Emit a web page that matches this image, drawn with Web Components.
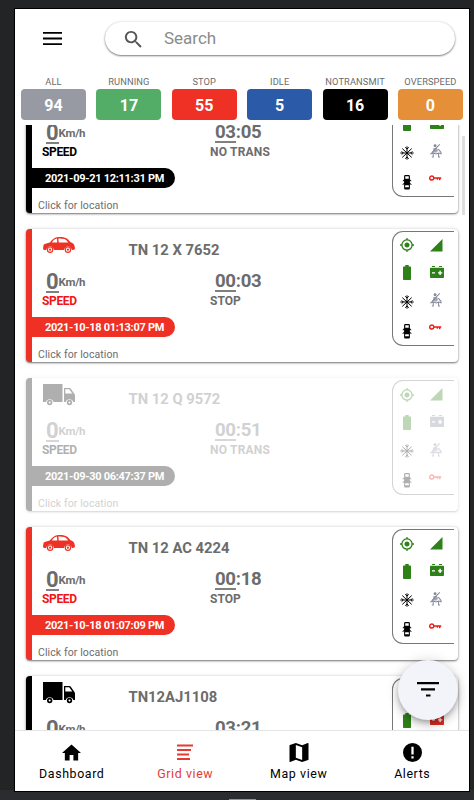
<!DOCTYPE html>
<html lang="en">
<head>
<meta charset="utf-8">
<title>Vehicles</title>
<style>
    html, body {
        margin: 0;
        height: 100%;
        overflow: hidden;
        font-family: Roboto, "Liberation Sans", sans-serif;
        background: #262729;
    }
</style>
</head>
<body>
<fleet-app></fleet-app>
<script>
const ICONS = {
    search: ['0 0 24 24', '<path d="M15.5 14h-.79l-.28-.27C15.41 12.59 16 11.11 16 9.5 16 5.91 13.09 3 9.5 3S3 5.91 3 9.5 5.91 16 9.5 16c1.61 0 3.09-.59 4.23-1.57l.27.28v.79l5 4.99L20.49 19l-4.99-5zm-6 0C7.01 14 5 11.99 5 9.5S7.01 5 9.5 5 14 7.01 14 9.5 11.99 14 9.5 14z"/>'],
    menu: ['0 0 19 13', '<path d="M0 0h19v1.8H0zM0 5.6h19v1.8H0zM0 11.2h19v1.800H0z"/>'],
    filter: ['0 0 22 15', '<path d="M0 0h22v2.2H0zM4 6.2h14v2.2H4zM9 12.4h4.5v2.200H9z"/>'],
    home: ['2 3 20 17', '<path d="M10 20v-6h4v6h5v-8h3L12 3 2 12h3v8z"/>'],
    grid: ['0 0 16 16', '<path d="M0 0h16v2H0zM0 4.5h14v2H0zM0 9h12v2H0zM0 13.5h13v2H0z"/>'],
    map: ['3 3 18 18', '<path d="M20.5 3l-.16.03L15 5.1 9 3 3.36 4.9c-.21.07-.36.25-.36.48V20.5c0 .28.22.5.5.5l.16-.03L9 18.9l6 2.1 5.64-1.9c.21-.07.36-.25.36-.48V3.5c0-.28-.22-.5-.5-.5zM15 19l-6-2.11V5l6 2.11V19z"/>'],
    alert: ['2 2 20 20', '<path fill-rule="evenodd" d="M12 2a10 10 0 1 0 0 20 10 10 0 0 0 0-20zm-1.2 4h2.4v8h-2.4zm0 10h2.4v2.2h-2.4z"/>'],
    gps: ['1 1 22 22', '<path d="M12 8c-2.21 0-4 1.79-4 4s1.79 4 4 4 4-1.79 4-4-1.79-4-4-4zm8.94 3c-.46-4.17-3.77-7.48-7.94-7.94V1h-2v2.06C6.83 3.52 3.52 6.83 3.06 11H1v2h2.06c.46 4.17 3.77 7.48 7.94 7.94V23h2v-2.06c4.17-.46 7.48-3.77 7.94-7.94H23v-2h-2.06zM12 19c-3.87 0-7-3.13-7-7s3.13-7 7-7 7 3.13 7 7-3.13 7-7 7z"/>'],
    signal: ['0 0 12 12', '<path d="M12 0v12H0z"/>'],
    battery: ['0 0 8 15', '<path d="M2.300 0h3.400v1.400h1.500c.5 0 .8.3.8.8v12c0 .5-.3.8-.8.8H.8c-.5 0-.8-.3-.8-.8v-12c0-.5.3-.8.8-.8h1.500z"/>'],
    accumulator: ['0 0 14 12', '<path fill-rule="evenodd" d="M2 0h3v1H2zM9 0h3v1H9zM.7 1.7h12.6c.4 0 .7.3.7.7v8.900c0 .4-.3.7-.7.7H.7c-.4 0-.7-.3-.7-.7V2.400c0-.4.3-.7.7-.7zM2 6.300v1.200h3V6.300zM9.400 4.700v1.500H8v1.400h1.400v1.500h1.400V7.600h1.500V6.200h-1.500V4.700z"/>'],
    snow: ['0 0 14 14', '<path fill="none" stroke="currentColor" stroke-width="1" d="M7 .3v13.400M.3 7h13.400M2.300 2.600l9.400 8.800M11.700 2.600l-9.400 8.800M5.200 1.300L7 3l1.800-1.700M5.200 12.700L7 11l1.800 1.700M1.600 5.300L3.300 7 1.600 8.700M12.400 5.300L10.700 7l1.700 1.700"/>'],
    seatbelt: ['0 0 13 15', '<circle cx="5.500" cy="1.800" r="1.600"/><path d="M3.700 4.200h3.500l1.500 2-1 3H3z" opacity=".75"/><path fill="none" stroke="currentColor" stroke-width="1.100" d="M10.500.4L1.800 9.600M9 5.500l3.300 4M.3 10.800l3.300-1 3.200 1 2.700-1 3.200 1M3.500 10.500v3.600H2M9.300 10.500v3.600h1.500"/>'],
    doors: ['0 0 10 15', '<path fill-rule="evenodd" d="M2.700 0h4.600l.7 1v3.500l1.600 1.700-.5.500L8 5.900v2l1.800 2-.6.500L8 9.300V14l-.7 1H2.700L2 14V9.300l-1.200 1.100-.6-.5L2 7.900v-2l-1.100.8-.5-.5L2 4.500V1zM3.200 1.300v2.700h3.600V1.300zM3.200 10.600L3 12.700h4l-.2-2.100z"/>'],
    key: ['0 0 13 6', '<path fill-rule="evenodd" d="M2.900.1a2.900 2.900 0 0 1 2.800 2.100H12.700v1.500h-.8v1.700h-1.500V3.700H9.400v1.200H8V3.700H5.700A2.900 2.900 0 1 1 2.900.1zm0 1.500a1.400 1.400 0 1 0 0 2.800 1.400 1.400 0 0 0 0-2.800z"/>'],
    car: ['0 0 32 16', '<path fill-rule="evenodd" d="M.8 12.900L0 11.500l.6-3.700C2 6.600 4.500 6 6.800 5.400 9 2.700 11.500.4 14 .2c3.200-.4 6.900-.2 9.300 1 1.700 1 3 2.500 4.300 4 1.800.7 3.500 1.700 3.800 3.200l.6 3-.9 1.300-2.300.2a4 4 0 0 0-7.800 0H11a4 4 0 0 0-7.800 0zM8.800 5.400h5.500l-.4-3.800c-2 .2-3.700 1.800-5.100 3.800zM15.300 1.500l.5 3.900h9.300c-1.100-1.600-2.300-2.800-3.900-3.300-1.900-.6-3.900-.7-5.900-.6zM7.100 9.500a3.200 3.200 0 1 1 0 6.400 3.200 3.200 0 0 1 0-6.400zm0 1.100a2.100 2.100 0 1 0 0 4.200 2.100 2.100 0 0 0 0-4.200zM24.900 9.500a3.200 3.200 0 1 1 0 6.400 3.200 3.200 0 0 1 0-6.400zm0 1.100a2.100 2.100 0 1 0 0 4.200 2.100 2.100 0 0 0 0-4.200z"/><circle cx="7.100" cy="12.700" r="1.100"/><circle cx="24.900" cy="12.700" r="1.100"/>'],
    truck: ['0 0 32 21', '<path fill-rule="evenodd" d="M0 0h19.500v18h-9a4 4 0 0 0-7.600 0H0zM21 4h5.500c.6 0 1 .3 1.300.7l3.300 4.800.9 1.600V18h-1.700a4 4 0 0 0-7.600 0H21zM22.300 5.300V9.500h7L26.200 5.300z"/><path fill-rule="evenodd" d="M6.700 15.800a2.700 2.700 0 1 1 0 5.400 2.700 2.700 0 0 1 0-5.400zm0 1.700a1 1 0 1 0 0 2 1 1 0 0 0 0-2zM26.500 15.800a2.700 2.700 0 1 1 0 5.400 2.700 2.700 0 0 1 0-5.400zm0 1.700a1 1 0 1 0 0 2 1 1 0 0 0 0-2z"/>']
};

class FleetIcon extends HTMLElement {
    connectedCallback() {
        const [viewBox, shapes] = ICONS[this.getAttribute('name')];
        this.attachShadow({ mode: 'open' }).innerHTML = `
            <style>
                :host { display: inline-block; flex: none; }
                svg { display: block; width: 100%; height: 100%; fill: currentColor; overflow: visible; }
            </style>
            <svg viewBox="${viewBox}">${shapes}</svg>
        `;
    }
}

class SearchHeader extends HTMLElement {
    connectedCallback() {
        this.attachShadow({ mode: 'open' }).innerHTML = `
            <style>
                :host { display: flex; align-items: center; padding: 13px 14px 0 28px; }
                .menu { width: 19px; height: 13px; margin-right: 43px; }
                .field {
                    flex: 1;
                    display: flex;
                    align-items: center;
                    height: 33px;
                    border-radius: 17px;
                    color: #8b8b8b;
                    font-size: 17px;
                    line-height: 20px;
                    box-shadow: 0 1px 2px rgba(0, 0, 0, .48), 0 0 3px rgba(0, 0, 0, .12);
                }
                .text { padding-bottom: 2px; }
                .search { width: 23px; height: 23px; margin: 1px 19px 0 17px; color: #555; }
            </style>
            <fleet-icon class="menu" name="menu"></fleet-icon>
            <div class="field"><fleet-icon class="search" name="search"></fleet-icon><div class="text"><slot></slot></div></div>
        `;
    }
}

class StatusChip extends HTMLElement {
    connectedCallback() {
        this.attachShadow({ mode: 'open' }).innerHTML = `
            <style>
                :host { display: block; width: 65px; flex: none; text-align: center; }
                .label {
                    display: flex;
                    justify-content: center;
                    height: 13px;
                    line-height: 13px;
                    font-size: 9.3px;
                    letter-spacing: .1px;
                    color: #6c6c6c;
                    white-space: nowrap;
                }
                .count {
                    margin-top: 1px;
                    height: 31px;
                    line-height: 33px;
                    border-radius: 4px;
                    background: ${this.getAttribute('color')};
                    color: #fff;
                    font-size: 16px;
                    font-weight: 700;
                }
            </style>
            <div class="label"><slot></slot></div>
            <div class="count">${this.getAttribute('count')}</div>
        `;
    }
}

class SensorPanel extends HTMLElement {
    connectedCallback() {
        this.attachShadow({ mode: 'open' }).innerHTML = `
            <style>
                :host {
                    display: grid;
                    box-sizing: border-box;
                    grid-template-columns: 28px 30px;
                    grid-template-rows: 27px 28px 30px 28px;
                    place-items: center;
                    width: 62px;
                    height: 115px;
                    border: 1px solid #777;
                    border-right: 0;
                    border-radius: 11px 0 0 11px;
                    color: #000;
                }
                .gps { width: 14px; height: 14px; color: #2e8019; }
                .signal { width: 12.5px; height: 12.5px; color: #2e8019; margin-bottom: 1px; }
                .battery { width: 8px; height: 15px; color: #2e8019; }
                .power { width: 14px; height: 12px; color: ${this.getAttribute('power')}; margin: 0 0 2px 2px; }
                .snow { width: 14px; height: 14px; }
                .seatbelt { width: 12px; height: 14px; color: #85889a; margin-bottom: 3px; }
                .doors { width: 10px; height: 14.5px; }
                .key { width: 12.5px; height: 6px; color: #ec1c12; margin: 0 1px 7px 0; }
            </style>
            <fleet-icon class="gps" name="gps"></fleet-icon>
            <fleet-icon class="signal" name="signal"></fleet-icon>
            <fleet-icon class="battery" name="battery"></fleet-icon>
            <fleet-icon class="power" name="accumulator"></fleet-icon>
            <fleet-icon class="snow" name="snow"></fleet-icon>
            <fleet-icon class="seatbelt" name="seatbelt"></fleet-icon>
            <fleet-icon class="doors" name="doors"></fleet-icon>
            <fleet-icon class="key" name="key"></fleet-icon>
        `;
    }
}

class VehicleCard extends HTMLElement {
    connectedCallback() {
        const get = name => this.getAttribute(name);
        this.attachShadow({ mode: 'open' }).innerHTML = `
            <style>
                :host {
                    display: flex;
                    box-sizing: border-box;
                    height: 133.2px;
                    border-left: 6px solid var(--accent);
                    border-radius: 4px;
                    background: #fff;
                    box-shadow: 0 1px 2px rgba(0, 0, 0, .5), 0 0 4px rgba(0, 0, 0, .13);
                    color: #6c6c6c;
                    font-weight: 700;
                    --accent: #000;
                }
                :host([state="stop"]) { --accent: #ee3124; }
                :host([disabled]) { opacity: .31; }
                .main { flex: 1; white-space: nowrap; }
                .head { display: flex; align-items: center; height: 33px; }
                .vehicle { width: 32px; margin: 0 53.5px 0 11px; color: var(--accent); }
                .vehicle[name="car"] { height: 16px; margin-top: -1px; }
                .vehicle[name="truck"] { height: 21px; }
                .title { font-size: 14.8px; padding-top: 10px; letter-spacing: 0; }
                .stats { display: grid; grid-template-columns: 168px 1fr; height: 55.5px; padding: 7px 0 0 10px; box-sizing: border-box; }
                .value { display: flex; height: 24px; line-height: 24px; }
                .num { font-size: 22px; line-height: 26px; border-bottom: 2px solid #808080; width: 12.5px; margin-left: 4px; height: 22.5px; }
                .unit { font-size: 11.5px; line-height: 26px; font-weight: 700; letter-spacing: -.3px; }
                .time { font-size: 18.6px; line-height: 25px; margin-left: 5px; letter-spacing: -.3px; height: 22.5px; }
                .time span { display: inline-block; height: 21px; border-bottom: 2px solid #808080; }
                .caption { font-size: 12px; line-height: 14px; margin-top: 1px; letter-spacing: -.35px; }
                .time + .caption { margin-top: 3px; letter-spacing: .2px; }
                .speed .caption { color: var(--accent); }
                :host([state="stop"]) .speed .caption { color: #f01414; }
                :host([state="stop"]) .time + .caption { letter-spacing: 0; }
                .pill {
                    display: inline-block;
                    box-sizing: border-box;
                    width: 143px;
                    height: 20px;
                    line-height: 21px;
                    padding-left: 13px;
                    border-radius: 0 10px 10px 0;
                    background: var(--accent);
                    color: #fff;
                    font-size: 11px;
                    letter-spacing: -.29px;
                    vertical-align: top;
                }
                .location { margin: 10px 0 0 6px; font-size: 10.5px; line-height: 15px; font-weight: 400; letter-spacing: .1px; }
                sensor-panel { margin: 2.4px 4px 0 0; }
            </style>
            <div class="main">
                <div class="head">
                    <fleet-icon class="vehicle" name="${get('vehicle')}"></fleet-icon>
                    <div class="title"><slot></slot></div>
                </div>
                <div class="stats">
                    <div class="speed">
                        <div class="value"><div class="num">0</div><div class="unit">Km/h</div></div>
                        <div class="caption">SPEED</div>
                    </div>
                    <div>
                        <div class="value time"><span>${get('time').slice(0, 2)}</span>${get('time').slice(2)}</div>
                        <div class="caption">${get('state') === 'stop' ? 'STOP' : 'NO TRANS'}</div>
                    </div>
                </div>
                <div class="pill">${get('date')}</div>
                <div class="location">Click for location</div>
            </div>
            <sensor-panel power="${get('power') || '#2e8019'}"></sensor-panel>
        `;
    }
}

class NavItem extends HTMLElement {
    connectedCallback() {
        this.attachShadow({ mode: 'open' }).innerHTML = `
            <style>
                :host {
                    flex: 1;
                    display: flex;
                    flex-direction: column;
                    align-items: center;
                    padding-top: 12px;
                    color: #000;
                    font-size: 12.4px;
                    letter-spacing: .6px;
                }
                :host([active]) { color: #e53a31; }
                fleet-icon { width: 19px; height: 19px; }
                fleet-icon[name="grid"] { width: 16px; }
                fleet-icon[name="map"] { width: 20px; }
                .label { line-height: 16px; margin-top: 4px; white-space: nowrap; }
            </style>
            <fleet-icon name="${this.getAttribute('icon')}"></fleet-icon>
            <div class="label"><slot></slot></div>
        `;
    }
}

class FleetApp extends HTMLElement {
    constructor() {
        super();
        this.attachShadow({ mode: 'open' });
        this.shadowRoot.innerHTML = `
            <style>
                :host {
                    display: flex;
                    position: relative;
                    box-sizing: border-box;
                    height: 800px;
                    width: 474px;
                    padding: 8px 4px 8px 14px;
                    background: linear-gradient(#232426 0 790px, #2b2c30 790px);
                }
                .screen {
                    flex: 1;
                    display: flex;
                    flex-direction: column;
                    min-width: 0;
                    background: #fff;
                    border: 1px solid #000;
                }
                .chips { display: flex; justify-content: space-between; padding: 20px 6px 5px; }
                .list { flex: 1; min-height: 0; overflow: hidden; position: relative; }
                .cards { display: flex; flex-direction: column; gap: 15.9px; margin: -45.5px 11px 0; }
                .thumb { position: absolute; right: 4.5px; top: 11px; width: 3px; height: 79px; background: #dedede; }
                .nav { display: flex; height: 60px; border-top: 1px solid #e4e4e4; background: #fff; }
                .fab {
                    position: absolute;
                    left: 398px;
                    top: 660px;
                    width: 60px;
                    height: 60px;
                    border-radius: 50%;
                    display: grid;
                    place-items: center;
                    background: #f3f4f9;
                    box-shadow: 0 3px 5px -1px rgba(0, 0, 0, .2), 0 5px 10px rgba(0, 0, 0, .16), 0 1px 14px rgba(0, 0, 0, .14);
                }
                .fab fleet-icon { width: 22px; height: 15px; margin-bottom: 1px; }
                .handle { position: absolute; left: 229px; top: 799px; width: 27px; height: 1px; background: #909194; }
            </style>
            <div class="screen">
                <search-header>Search</search-header>
                <div class="chips">
                    <status-chip count="94" color="#979aa3">ALL</status-chip>
                    <status-chip count="17" color="#53ad67">RUNNING</status-chip>
                    <status-chip count="55" color="#ee3124">STOP</status-chip>
                    <status-chip count="5" color="#2b5ba8">IDLE</status-chip>
                    <status-chip count="16" color="#000">NOTRANSMIT</status-chip>
                    <status-chip count="0" color="#e68f39">OVERSPEED</status-chip>
                </div>
                <div class="list">
                    <div class="cards">
                        <vehicle-card vehicle="truck" state="offline" time="03:05" date="2021-09-21 12:11:31 PM"></vehicle-card>
                        <vehicle-card vehicle="car" state="stop" time="00:03" date="2021-10-18 01:13:07 PM">TN 12 X 7652</vehicle-card>
                        <vehicle-card vehicle="truck" state="offline" time="00:51" date="2021-09-30 06:47:37 PM" power="#85889a" disabled>TN 12 Q 9572</vehicle-card>
                        <vehicle-card vehicle="car" state="stop" time="00:18" date="2021-10-18 01:07:09 PM">TN 12 AC 4224</vehicle-card>
                        <vehicle-card vehicle="truck" state="offline" time="03:21" date="" power="#e02b22">TN12AJ1108</vehicle-card>
                    </div>
                    <div class="thumb"></div>
                </div>
                <div class="nav">
                    <nav-item icon="home">Dashboard</nav-item>
                    <nav-item icon="grid" active>Grid view</nav-item>
                    <nav-item icon="map">Map view</nav-item>
                    <nav-item icon="alert">Alerts</nav-item>
                </div>
            </div>
            <div class="fab"><fleet-icon name="filter"></fleet-icon></div>
            <div class="handle"></div>
        `;
    }
}

customElements.define('fleet-icon', FleetIcon);
customElements.define('search-header', SearchHeader);
customElements.define('status-chip', StatusChip);
customElements.define('sensor-panel', SensorPanel);
customElements.define('vehicle-card', VehicleCard);
customElements.define('nav-item', NavItem);
customElements.define('fleet-app', FleetApp);
</script>
</body>
</html>
